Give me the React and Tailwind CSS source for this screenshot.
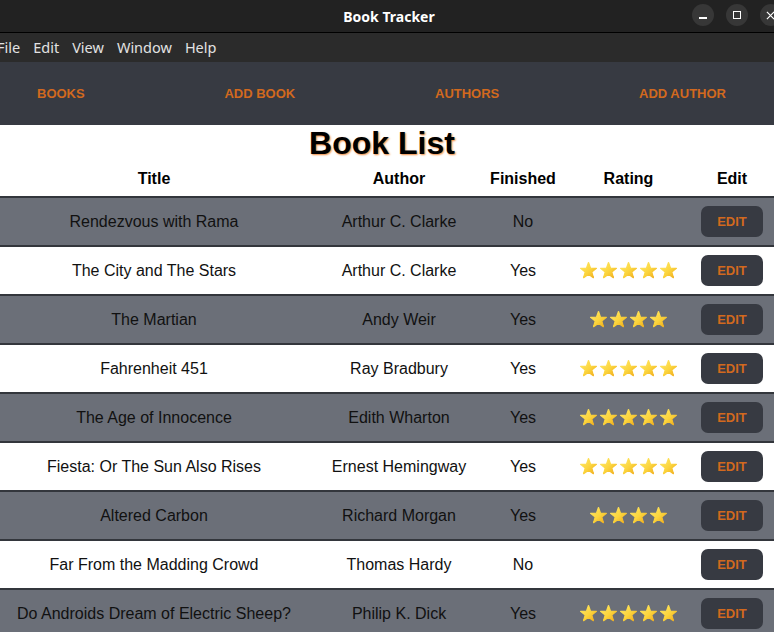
import React from "react";

const books = [
  ["Rendezvous with Rama", "Arthur C. Clarke", "No", 0],
  ["The City and The Stars", "Arthur C. Clarke", "Yes", 5],
  ["The Martian", "Andy Weir", "Yes", 4],
  ["Fahrenheit 451", "Ray Bradbury", "Yes", 5],
  ["The Age of Innocence", "Edith Wharton", "Yes", 5],
  ["Fiesta: Or The Sun Also Rises", "Ernest Hemingway", "Yes", 5],
  ["Altered Carbon", "Richard Morgan", "Yes", 4],
  ["Far From the Madding Crowd", "Thomas Hardy", "No", 0],
  ["Do Androids Dream of Electric Sheep?", "Philip K. Dick", "Yes", 5],
];

function Star({ id }) {
  return (
    <svg viewBox="0 0 24 24" className="w-[19px] h-[19px]">
      <defs>
        <linearGradient id={id} x1="0" y1="0" x2="1" y2="1">
          <stop offset="0" stopColor="#ffe866" />
          <stop offset="0.55" stopColor="#fbd43c" />
          <stop offset="1" stopColor="#f0a91a" />
        </linearGradient>
      </defs>
      <polygon
        points="12,2 14.53,9.02 21.99,9.26 16.09,13.83 18.17,20.99 12,16.8 5.83,20.99 7.91,13.83 2.01,9.26 9.47,9.02"
        fill={`url(#${id})`}
        stroke={`url(#${id})`}
        strokeWidth="1.6"
        strokeLinejoin="round"
      />
    </svg>
  );
}

function Row({ b, i }) {
  const gray = i % 2 === 0;
  return (
    <div
      className={`flex shrink-0 h-[49px] border-t-2 border-[#33363c] items-center text-[16px] text-[#111] ${
        gray ? "bg-[#6b6f78]" : "bg-white"
      }`}
    >
      <div className="w-[308px] text-center whitespace-nowrap">{b[0]}</div>
      <div className="w-[182px] text-center whitespace-nowrap">{b[1]}</div>
      <div className="w-[66px] text-center">{b[2]}</div>
      <div className="w-[145px] flex justify-center gap-px">
        {Array.from({ length: b[3] }).map((_, k) => (
          <Star key={k} id={`g${i}-${k}`} />
        ))}
      </div>
      <div className="w-[62px] flex justify-center">
        <button className="w-[62px] h-[31px] rounded-[7px] bg-[#373a42] text-[#d2691e] font-bold text-[13px]">
          EDIT
        </button>
      </div>
    </div>
  );
}

export default function App() {
  return (
    <div className="w-[774px] h-[632px] overflow-hidden flex flex-col bg-white font-['Liberation_Sans',Arial,sans-serif]">
      {/* title bar */}
      <div className="h-[33px] shrink-0 bg-[#222222] border-b border-black relative flex items-center justify-center">
        <span className="text-white font-bold text-[14px] font-['Noto_Sans',sans-serif] ml-[4px]">Book Tracker</span>
        <div className="absolute top-[4px] left-[692px] flex gap-[12px]">
          <div className="w-[22px] h-[22px] rounded-full bg-[#373737] flex items-center justify-center">
            <div className="w-[8px] h-[1.5px] bg-white mt-[6px]" />
          </div>
          <div className="w-[22px] h-[22px] rounded-full bg-[#373737] flex items-center justify-center">
            <div className="w-[8px] h-[8px] border border-white" />
          </div>
          <div className="w-[22px] h-[22px] rounded-full bg-[#373737] flex items-center justify-start pl-[6px]">
            <svg viewBox="0 0 10 10" className="w-[9px] h-[9px]">
              <path d="M1 1L9 9M9 1L1 9" stroke="white" strokeWidth="1.3" />
            </svg>
          </div>
        </div>
      </div>
      {/* menu bar */}
      <div className="h-[29px] shrink-0 bg-[#2b2b2b] flex items-center gap-[13px] ml-[-3px] text-[14.5px] text-[#e2e2e2] font-['Noto_Sans',sans-serif]">
        <span>File</span>
        <span>Edit</span>
        <span>View</span>
        <span>Window</span>
        <span>Help</span>
      </div>
      {/* nav */}
      <div className="h-[63px] shrink-0 bg-[#373a42] flex items-center justify-between pl-[37px] pr-[48px] text-[13px] font-bold text-[#d2691e]">
        <span>BOOKS</span>
        <span>ADD BOOK</span>
        <span>AUTHORS</span>
        <span>ADD AUTHOR</span>
      </div>
      {/* content */}
      <div className="h-[37px] shrink-0 flex items-center justify-center">
        <h1 className="text-[32px] font-bold leading-[37px] text-black mr-[10px] [text-shadow:1px_1px_2px_#f08a3c]">
          Book List
        </h1>
      </div>
      <div className="h-[34px] shrink-0 flex items-center text-[16px] font-bold text-black">
        <div className="w-[308px] text-center">Title</div>
        <div className="w-[182px] text-center">Author</div>
        <div className="w-[66px] text-center">Finished</div>
        <div className="w-[145px] text-center">Rating</div>
        <div className="w-[62px] text-center">Edit</div>
      </div>
      {books.map((b, i) => (
        <Row key={i} b={b} i={i} />
      ))}
    </div>
  );
}
